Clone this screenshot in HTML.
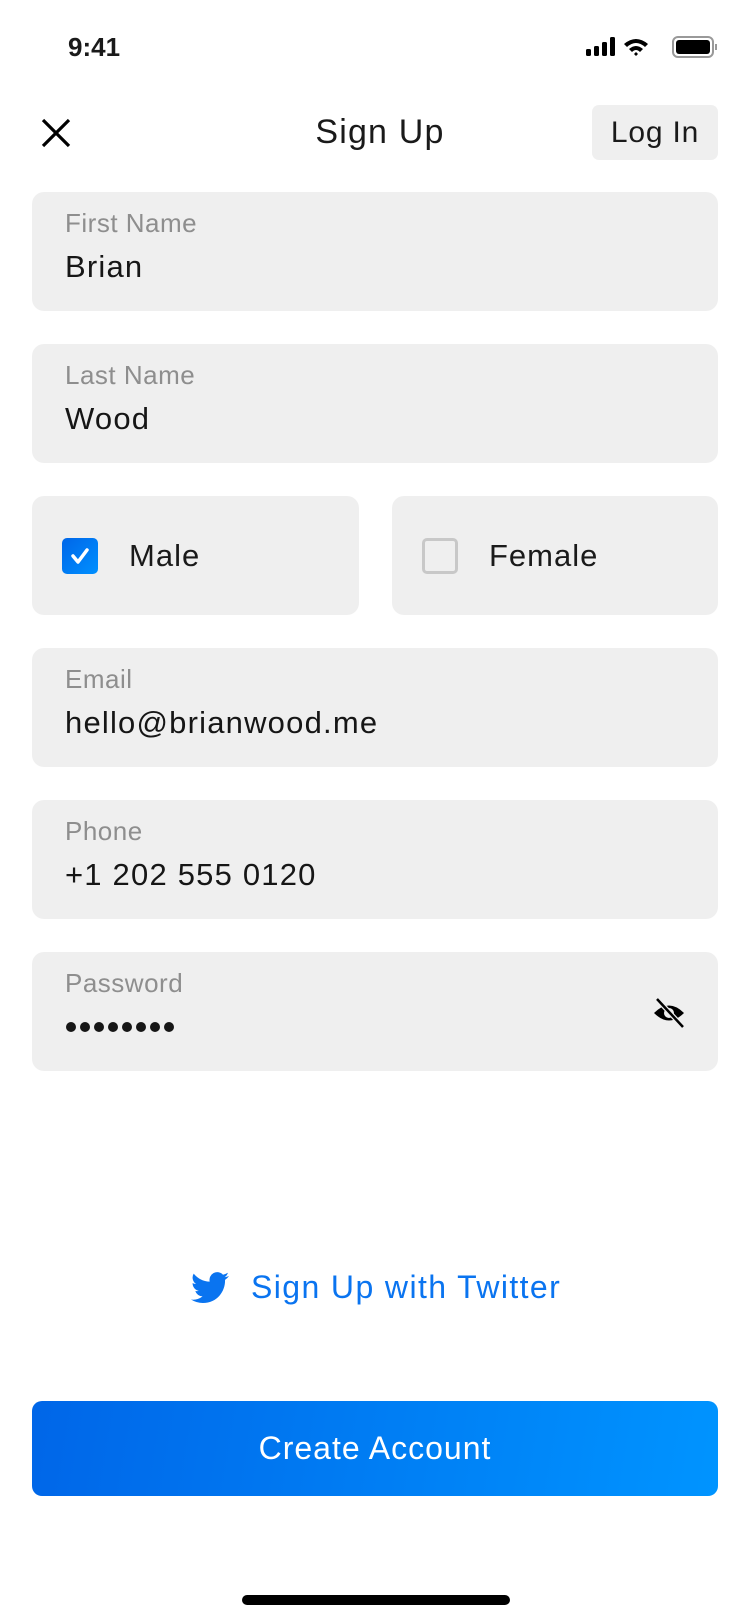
<!DOCTYPE html>
<html><head><meta charset="utf-8"><style>
*{margin:0;padding:0;box-sizing:border-box}
body{width:750px;height:1624px;background:#fff;font-family:"Liberation Sans",sans-serif;position:relative;overflow:hidden;color:#1a1a1a}
.a{position:absolute}
.f{position:absolute;left:32px;width:686px;height:119px;background:#efefef;border-radius:12px}
.f .l{position:absolute;left:33px;top:16px;font-size:26px;color:#8e8e8e;letter-spacing:0.5px}
.f .v{position:absolute;left:33px;top:57px;font-size:31px;color:#161616;letter-spacing:1.2px}
.dots{position:absolute;left:34px;top:70px;display:flex;gap:4px}
.dots i{display:block;width:10px;height:10px;border-radius:50%;background:#161616}
</style></head><body>
<div class="a" style="left:68px;top:32px;font-size:26px;font-weight:bold">9:41</div>
<svg class="a" style="left:586px;top:36px" width="136" height="24" viewBox="0 0 136 24">
<rect x="0" y="13" width="5" height="7" rx="1.5" fill="#000"/><rect x="8" y="10" width="5" height="10" rx="1.5" fill="#000"/><rect x="16" y="6" width="5" height="14" rx="1.5" fill="#000"/><rect x="24" y="1" width="5" height="19" rx="1.5" fill="#000"/>
<path d="M38 8 Q50 -2 62 8 L59 11 Q50 3 41 11Z M43 13 Q50 7 57 13 L54 16 Q50 12 46 16Z M48 18 L50 16 L52 18 L50 20Z" fill="#000"/>
<rect x="87" y="1" width="40" height="20" rx="5" fill="none" stroke="#999" stroke-width="2"/><rect x="90" y="4" width="34" height="14" rx="3" fill="#000"/><rect x="129" y="8" width="2" height="6" fill="#999"/>
</svg>
<svg class="a" style="left:41px;top:118px" width="30" height="30" viewBox="0 0 30 30"><path d="M2 2L28 28M28 2L2 28" stroke="#000" stroke-width="3.2"/></svg>
<div class="a" style="left:0;width:760px;top:113px;text-align:center;font-size:34px;letter-spacing:1.2px">Sign Up</div>
<div class="a" style="left:592px;top:105px;width:126px;height:55px;background:#efefef;border-radius:7px;font-size:30px;text-align:center;line-height:55px;letter-spacing:0.8px">Log In</div>
<div class="f" style="top:192px"><div class="l">First Name</div><div class="v">Brian</div></div>
<div class="f" style="top:344px"><div class="l">Last Name</div><div class="v">Wood</div></div>
<div class="f" style="top:496px;width:327px"><div class="a" style="left:30px;top:42px;width:36px;height:36px;border-radius:5px;background:linear-gradient(135deg,#0066e8,#0090ff)"><svg width="36" height="36"><path d="M11 18l5 6 9-12" stroke="#fff" stroke-width="3.5" fill="none" stroke-linecap="round" stroke-linejoin="round"/></svg></div><div class="a" style="left:97px;top:42px;font-size:31px;letter-spacing:1px">Male</div></div>
<div class="f" style="top:496px;left:392px;width:326px"><div class="a" style="left:30px;top:42px;width:36px;height:36px;border-radius:5px;border:3px solid #c8c8c8"></div><div class="a" style="left:97px;top:42px;font-size:31px;letter-spacing:1px">Female</div></div>
<div class="f" style="top:648px"><div class="l">Email</div><div class="v">hello@brianwood.me</div></div>
<div class="f" style="top:800px"><div class="l">Phone</div><div class="v">+1 202 555 0120</div></div>
<div class="f" style="top:952px"><div class="l">Password</div><div class="dots"><i></i><i></i><i></i><i></i><i></i><i></i><i></i><i></i></div>
<svg class="a" style="left:620px;top:44px" width="34" height="34" viewBox="0 0 34 34"><path d="M2 17 Q17 2 32 17 Q17 32 2 17Z" fill="#000"/><circle cx="17" cy="17" r="5" fill="#efefef"/><path d="M5 3L31 31" stroke="#efefef" stroke-width="5"/><path d="M5 3L31 31" stroke="#000" stroke-width="2.5"/></svg></div>
<svg class="a" style="left:191px;top:1272px" width="38" height="32" viewBox="0 0 24 20"><path d="M24 2.4a9.8 9.8 0 0 1-2.8.8A4.9 4.9 0 0 0 23.3.4a9.9 9.9 0 0 1-3.1 1.2A4.9 4.9 0 0 0 11.8 6 14 14 0 0 1 1.7.9a4.9 4.9 0 0 0 1.5 6.6A4.9 4.9 0 0 1 1 6.9a4.9 4.9 0 0 0 3.9 4.9 4.9 4.9 0 0 1-2.2.1 4.9 4.9 0 0 0 4.6 3.4A9.9 9.9 0 0 1 0 17.3 14 14 0 0 0 7.5 19.5c9.1 0 14-7.5 14-14v-.6A10 10 0 0 0 24 2.4z" fill="#0a74f0"/></svg>
<div class="a" style="left:251px;top:1269px;font-size:32px;color:#0a74f0;letter-spacing:1.4px">Sign Up with Twitter</div>
<div class="a" style="left:32px;top:1401px;width:686px;height:95px;border-radius:10px;background:linear-gradient(100deg,#0066e8,#0094ff);color:#fff;font-size:32px;text-align:center;line-height:95px;letter-spacing:1px">Create Account</div>
<div class="a" style="left:242px;top:1595px;width:268px;height:10px;border-radius:5px;background:#000"></div>
</body></html>
